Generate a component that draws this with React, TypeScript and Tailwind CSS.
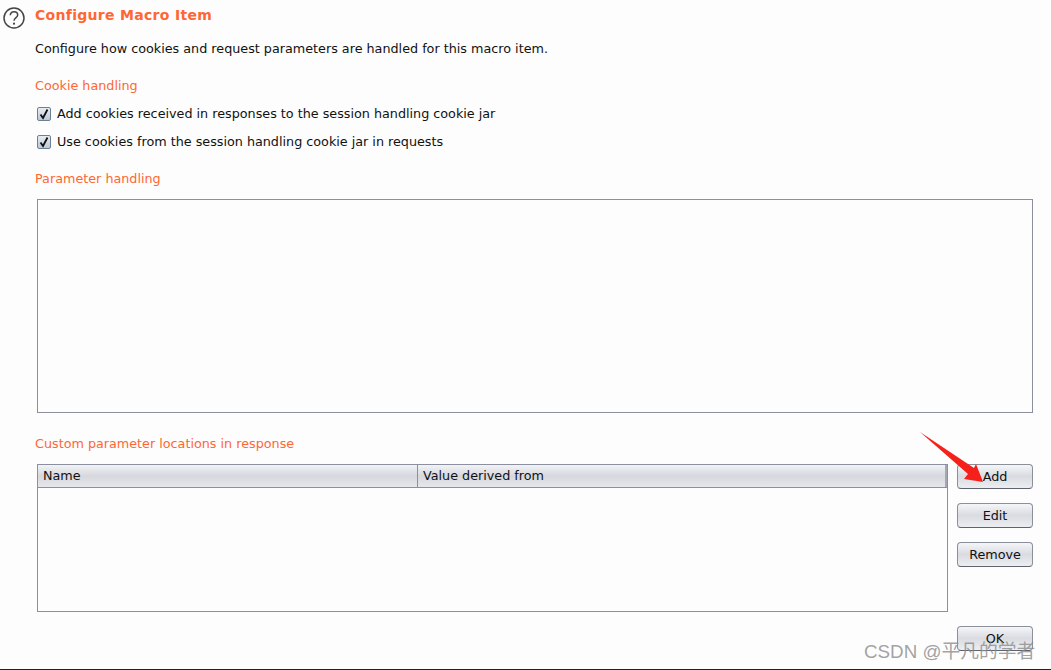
const font = { fontFamily: '"DejaVu Sans", sans-serif' };

function Check({ label }: { label: string }) {
  return (
    <div className="flex h-[28px] items-center">
      <span className="ml-[2px] mr-[6px] flex h-[14px] w-[14px] items-center justify-center rounded-[2px] border border-[#6f7f92] bg-gradient-to-b from-[#e8edf3] to-[#bcc9d8]">
        <svg width="12" height="12" viewBox="0 0 12 12" fill="none">
          <path d="M2.5 6.5 L5 10 L9.5 1.5" stroke="#111" strokeWidth="1.8" />
        </svg>
      </span>
      <span className="text-[12.75px] text-[#111]">{label}</span>
    </div>
  );
}

function Btn({ label }: { label: string }) {
  return (
    <button className="flex h-[25px] w-[76px] items-center justify-center rounded-[4px] border border-[#8b8f9a] border-b-[#5f6370] bg-gradient-to-b from-[#f5f6f8] via-[#d9dbe1] to-[#eceef1] text-[12.75px] text-[#111]">
      {label}
    </button>
  );
}

export default function App() {
  return (
    <div style={font} className="relative flex h-[670px] w-[1051px] overflow-hidden border-b border-[#222] bg-[#fdfdfd]">
      <div className="w-[35px] shrink-0 pl-[3px] pt-[7px]">
        <svg width="22" height="22" viewBox="0 0 22 22" fill="none">
          <circle cx="11" cy="11" r="10" stroke="#444" strokeWidth="1.5" />
          <path d="M7.3 8.3 C7.3 5.9 9 4.8 11 4.8 C13.1 4.8 14.7 6.1 14.7 8 C14.7 10.5 11 10.7 11 13.8" stroke="#444" strokeWidth="1.5" />
          <circle cx="11" cy="16.7" r="1.1" fill="#444" />
        </svg>
      </div>
      <div className="flex min-w-0 flex-1 flex-col pt-[5px]">
        <h1 className="h-[20px] text-[14px] font-bold leading-[20px] tracking-[0.3px] text-[#ff6633]">Configure Macro Item</h1>
        <p className="mt-[15px] h-[18px] text-[12.75px] leading-[18px] text-[#111]">
          Configure how cookies and request parameters are handled for this macro item.
        </p>
        <h2 className="mt-[19px] h-[18px] text-[12.75px] leading-[18px] text-[#ff6633]">Cookie handling</h2>
        <div className="mt-[5px] flex flex-col">
          <Check label="Add cookies received in responses to the session handling cookie jar" />
          <Check label="Use cookies from the session handling cookie jar in requests" />
        </div>
        <h2 className="mt-[14px] h-[18px] text-[12.75px] leading-[18px] text-[#ff6633]">Parameter handling</h2>
        <div className="ml-[2px] mr-[18px] mt-[11px] h-[214px] border border-[#8b8f9f] bg-[#fdfdfd]" />
        <h2 className="mt-[22px] h-[18px] text-[12.75px] leading-[18px] text-[#ff6633]">Custom parameter locations in response</h2>
        <div className="mr-[18px] mt-[11px] flex items-start gap-[9px] pl-[2px]">
          <div className="h-[148px] flex-1 border border-[#8b8f9f]">
            <div className="flex h-[23px] border-b border-[#8b8f9f] bg-gradient-to-b from-[#f2f3f5] via-[#d6d8de] to-[#e6e7eb] text-[12.75px] leading-[22px] text-[#111]">
              <div className="w-[380px] border-r border-[#8b8f9f] pl-[5px]">Name</div>
              <div className="flex-1 pl-[5px]">Value derived from</div>
              <div className="w-[2px] bg-[#a5a8b3]" />
            </div>
          </div>
          <div className="flex flex-col gap-[14px]">
            <Btn label="Add" />
            <Btn label="Edit" />
            <Btn label="Remove" />
            <div className="mt-[45px]">
              <Btn label="OK" />
            </div>
          </div>
        </div>
      </div>

      {/* annotation arrow */}
      <svg className="absolute left-[915px] top-[428px]" width="80" height="60" viewBox="0 0 80 60">
        <path d="M5 4 L59 40 L61 36 L68 54 L49 51 L53 46 Z" fill="#f5201a" />
      </svg>

      {/* watermark */}
      <div
        style={{ fontFamily: '"Liberation Sans", "Noto Sans CJK SC", sans-serif' }}
        className="absolute left-[864px] top-[640px] text-[18.8px] leading-[24px] text-[#8a8a8a]/80"
      >
        CSDN @平凡的学者
      </div>
    </div>
  );
}
